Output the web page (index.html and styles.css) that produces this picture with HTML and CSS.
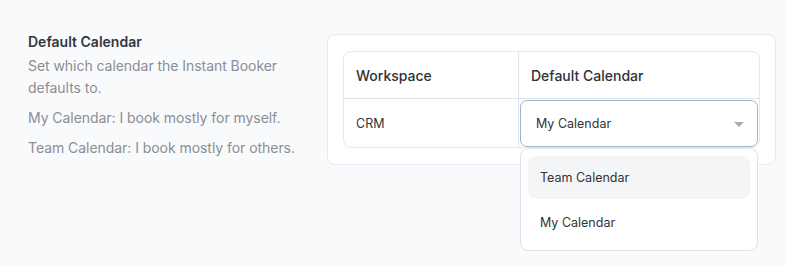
FILE: index.html
```html
<!DOCTYPE html>
<html lang="en">
<head>
  <meta charset="UTF-8" />
  <title>Default Calendar</title>
  <link rel="stylesheet" href="styles.css">
</head>
<body>
  <div class="setting">
    <div class="setting-info">
      <h3>Default Calendar</h3>
      <p>Set which calendar the Instant Booker defaults to.</p>
      <p>My Calendar: I book mostly for myself.</p>
      <p>Team Calendar: I book mostly for others.</p>
    </div>

    <div class="card">
      <table class="cal-table">
        <thead>
          <tr>
            <th class="col-ws">Workspace</th>
            <th>Default Calendar</th>
          </tr>
        </thead>
        <tbody>
          <tr>
            <td class="col-ws">CRM</td>
            <td class="select-cell">
              <div class="select">
                <span>My Calendar</span>
                <span class="caret"></span>
                <ul class="dropdown">
                  <li class="hover">Team Calendar</li>
                  <li>My Calendar</li>
                </ul>
              </div>
            </td>
          </tr>
        </tbody>
      </table>
    </div>
  </div>
</body>
</html>
```

FILE: styles.css
```css
* { box-sizing: border-box; }

html, body {
  min-height: 100%;
}

body {
  margin: 0;
  min-height: 266px;
  font-family: Inter, 'Liberation Sans', sans-serif;
  background: #f9fafc;
  color: #333;
}

.setting {
  display: flex;
  min-height: 266px;
  padding: 34px 0 0 28px;
}

.setting-info {
  width: 299px;
}

.setting-info h3 {
  margin: 0 0 5px;
  font-size: 14px;
  font-weight: 600;
  line-height: 16px;
  color: #34373c;
}

.setting-info p {
  margin: 0 0 8px;
  font-size: 14px;
  line-height: 22px;
  color: #8a8e95;
  width: 285px;
  letter-spacing: -0.05px;
}

.card {
  width: 449px;
  height: 131px;
  background: #fff;
  border: 1px solid #e6e9ef;
  border-radius: 8px;
  padding: 16px 15px 15px;
}

.cal-table {
  width: 417px;
  border-collapse: separate;
  border-spacing: 0;
  border: 1px solid #e3e8ef;
  border-radius: 8px;
  font-size: 13px;
}

.cal-table th {
  height: 47px;
  text-align: left;
  font-weight: 500;
  font-size: 14px;
  color: #2f3237;
  padding: 0 12px;
  border-bottom: 1px solid #dde3ec;
}

.cal-table td {
  height: 48px;
  padding: 0 12px;
  font-size: 12.5px;
  color: #333;
}

.col-ws {
  width: 175px;
  border-right: 1px solid #dde3ec;
}

.cal-table td.select-cell {
  padding: 1px 1px 0 1px;
}

.select {
  position: relative;
  display: flex;
  align-items: center;
  justify-content: space-between;
  height: 47px;
  padding: 0 13px 0 15px;
  border: 1px solid #9fb4cc;
  border-radius: 7px;
  font-size: 12.5px;
  color: #333;
  background: #fff;
}

.caret {
  width: 0;
  height: 0;
  border-left: 5px solid transparent;
  border-right: 5px solid transparent;
  border-top: 5px solid #a9acb1;
  margin-top: 2px;
}

.dropdown {
  position: absolute;
  top: 47px;
  left: -1px;
  right: -1px;
  margin: 0;
  padding: 7px 7px 6px;
  list-style: none;
  background: #fff;
  border: 1px solid #dde3ec;
  border-radius: 8px;
  z-index: 10;
}

.dropdown li {
  height: 43px;
  display: flex;
  align-items: center;
  padding-left: 12px;
  border-radius: 8px;
  font-size: 12.5px;
  color: #333;
}

.dropdown li + li {
  margin-top: 2px;
}

.dropdown li.hover {
  background: #f4f5f7;
}
```
